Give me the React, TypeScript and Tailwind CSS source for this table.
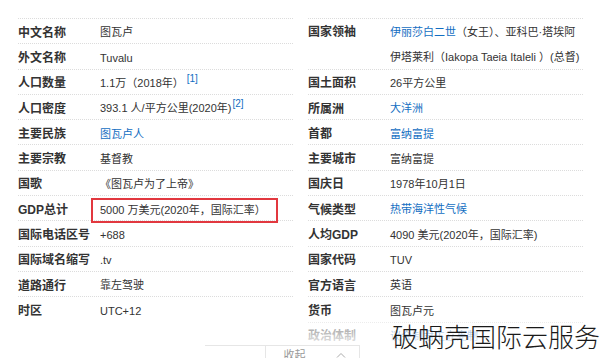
import React from 'react';

type Cell = { label: string; value: React.ReactNode; lines?: number; boxed?: boolean };

const link = 'text-[#136ec2]';

const leftRows: Cell[] = [
  { label: '中文名称', value: '图瓦卢' },
  { label: '外文名称', value: 'Tuvalu' },
  {
    label: '人口数量',
    value: (
      <>
        1.1万（2018年）<sup className={`${link} text-[10px] ml-[3px]`}>[1]</sup>
      </>
    ),
  },
  {
    label: '人口密度',
    value: (
      <>
        393.1 人/平方公里(2020年)<sup className={`${link} text-[10px] ml-[1px]`}>[2]</sup>
      </>
    ),
  },
  { label: '主要民族', value: <span className={link}>图瓦卢人</span> },
  { label: '主要宗教', value: '基督教' },
  { label: '国歌', value: '《图瓦卢为了上帝》' },
  { label: 'GDP总计', value: '5000 万美元(2020年，国际汇率）', boxed: true },
  { label: '国际电话区号', value: '+688' },
  { label: '国际域名缩写', value: '.tv' },
  { label: '道路通行', value: '靠左驾驶' },
  { label: '时区', value: 'UTC+12' },
];

const rightRows: Cell[] = [
  {
    label: '国家领袖',
    lines: 2,
    value: (
      <div className="flex flex-col">
        <span className="whitespace-nowrap h-[25.3px] leading-[25.3px]">
          <span className={link}>伊丽莎白二世</span>（女王）、亚科巴·塔埃阿
        </span>
        <span className="whitespace-nowrap h-[25.3px] leading-[25.3px]">伊塔莱利（Iakopa Taeia Italeli ）(总督)</span>
      </div>
    ),
  },
  { label: '国土面积', value: '26平方公里' },
  { label: '所属洲', value: <span className={link}>大洋洲</span> },
  { label: '首都', value: <span className={link}>富纳富提</span> },
  { label: '主要城市', value: '富纳富提' },
  { label: '国庆日', value: '1978年10月1日' },
  { label: '气候类型', value: <span className={link}>热带海洋性气候</span> },
  { label: '人均GDP', value: '4090 美元(2020年，国际汇率)' },
  { label: '国家代码', value: 'TUV' },
  { label: '官方语言', value: '英语' },
  { label: '货币', value: '图瓦卢元' },
  { label: '政治体制', value: <span className={link}>议会制君主立宪制</span> },
];

function Row({ cell }: { cell: Cell }) {
  const tall = cell.lines === 2;
  return (
    <div
      className={`flex border-t border-dotted border-[#dcdcdc] ${tall ? 'h-[50.6px] items-start pt-[1px]' : 'h-[25.3px] items-center pt-[3px]'}`}
    >
      <div className={`w-[82px] shrink-0 font-bold text-[12px] text-[#333] ${tall ? 'leading-[25.3px]' : ''}`}>
        {cell.label}
      </div>
      <div className={`flex-1 min-w-0 text-[11px] text-[#333] ${tall ? 'overflow-hidden' : ''}`}>
        {cell.boxed ? (
          <span className="inline-block -ml-[9px] mt-[2px] border-2 border-[#e2383f] pl-[7px] pr-[10px] py-[2px] whitespace-nowrap">
            {cell.value}
          </span>
        ) : (
          <span className="whitespace-nowrap">{cell.value}</span>
        )}
      </div>
    </div>
  );
}

export default function App() {
  return (
    <div
      className="relative w-[600px] h-[358px] overflow-hidden bg-white"
      style={{ fontFamily: '"Liberation Sans", Arial, "Noto Sans CJK SC", sans-serif' }}
    >
      <div className="flex gap-[15px] pl-[18px] pt-[18px]">
        <div className="w-[275px]">
          {leftRows.map((c) => (
            <Row key={c.label} cell={c} />
          ))}
        </div>
        <div className="w-[275px]">
          {rightRows.map((c) => (
            <Row key={c.label} cell={c} />
          ))}
        </div>
      </div>

      {/* fade out toward the collapse bar */}
      <div className="absolute left-0 right-0 top-[318px] h-[27px] bg-gradient-to-b from-white/40 to-white/90" />
      <div className="absolute left-0 right-0 top-[345px] bottom-0 bg-white" />
      <div className="absolute left-[205px] w-[60px] top-[345px] border-t border-[#e6e6e6]" />
      <div className="absolute left-[265px] w-[95px] top-[345px] h-[20px] border border-[#e6e6e6] bg-white flex items-center justify-center gap-[30px] text-[11px] text-[#999]">
        <span className="ml-[4px]">收起</span>
        <svg width="10" height="6" viewBox="0 0 10 6" fill="none" stroke="#aaa" strokeWidth="1">
          <path d="M1 5.5 L5 1.5 L9 5.5" />
        </svg>
      </div>

      {/* watermark */}
      <div
        className="absolute left-[392px] top-[319px] text-[26px] leading-[34px] text-[#1a1a1a] font-light whitespace-nowrap"
        style={{ fontFamily: '"Noto Sans CJK SC", sans-serif' }}
      >
        破蜗壳国际云服务
      </div>
    </div>
  );
}
